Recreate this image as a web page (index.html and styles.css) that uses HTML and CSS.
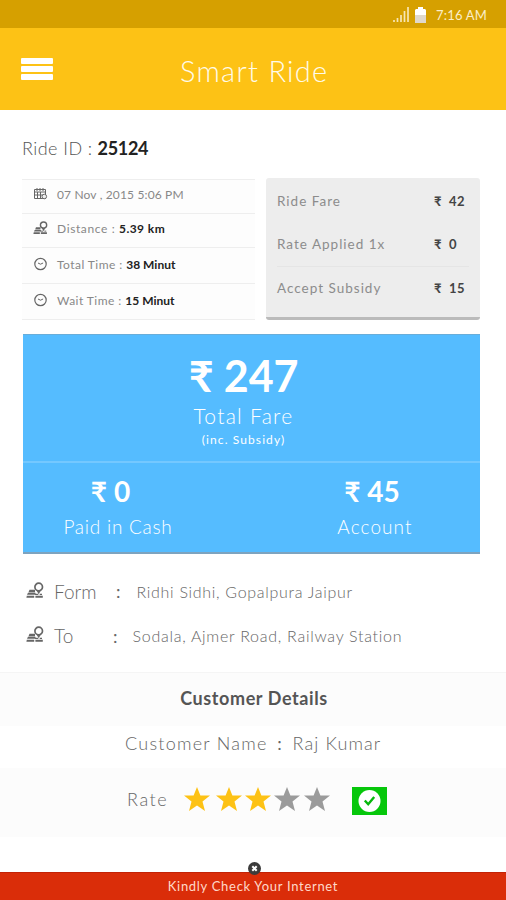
FILE: index.html
```html
<!DOCTYPE html>
<html lang="en">
<head>
<meta charset="utf-8">
<title>Smart Ride</title>
<link rel="stylesheet" href="styles.css">
</head>
<body>
<svg class="defs" width="0" height="0" aria-hidden="true">
  <symbol id="route" viewBox="0 0 18 17">
    <circle cx="12.700" cy="5" r="3.800" fill="none" stroke="currentColor" stroke-width="1.700"/>
    <path d="M10.400 8.300l2.300 4 2.300-4z" fill="currentColor"/>
    <path d="M3.500 7.700h5.500v2.500H2.500zM2 10.800h7.500v2H1zM.8 13.700h7.400v2H.4zM9.400 13.700h7.400v2H9.400z" fill="currentColor"/>
    <path d="M9 12.300h3.300M13.700 12.300h2.300" stroke="currentColor" stroke-width="1.200"/>
  </symbol>
  <symbol id="clock" viewBox="0 0 14 14">
    <circle cx="7" cy="7" r="5.700" fill="none" stroke="currentColor" stroke-width="1.200"/>
    <path d="M4.500 6l2.500 1.200L9.600 6" fill="none" stroke="currentColor"/>
  </symbol>
  <symbol id="star" viewBox="0 0 26 24">
    <path d="M13 0l3.400 8.500H26l-7.500 6L21 24l-8-5.500L5 24l2.500-9.500L0 8.500h9.600z" fill="currentColor"/>
  </symbol>
</svg>

<div class="status">
  <svg width="16" height="16" viewBox="0 0 16 16"><path d="M1 15v-2M4.500 15v-4M8 15V8M11.500 15V4M15 15V0" stroke="#f7e6b4" stroke-width="1.700"/></svg>
  <svg class="battery" width="11" height="16" viewBox="0 0 11 16"><path d="M3 0h5v2h2l1 1v5H0V3l1-1h2z" fill="#fff"/><path d="M0 8h11v8H0z" fill="#e0d8cc"/></svg>
  <span class="time">7:16 AM</span>
</div>
<header class="bar">
  <div class="menu"><i></i><i></i><i></i></div>
  <h1>Smart Ride</h1>
</header>

<p class="ride-id"><span>Ride ID :</span> <b>25124</b></p>

<div class="cards">
  <ul class="trip">
    <li><svg width="14" height="12" viewBox="0 0 14 12"><path d="M1 1.500h11v9H1zM3.500 0v3M6.500 0v3M9.500 0v3M1 4h11M1 7h9M4 4v6M7 4v6" fill="none" stroke="currentColor"/><circle cx="10.800" cy="8.500" r="2.300" fill="#eee" stroke="currentColor"/></svg><span class="t-date">07 Nov , 2015 5:06 PM</span></li>
    <li><svg width="15" height="14"><use href="#route"/></svg><span class="t-dist">Distance : <b>5.39 km</b></span></li>
    <li><svg width="14" height="14"><use href="#clock"/></svg><span class="t-time">Total Time : <b>38 Minut</b></span></li>
    <li><svg width="14" height="14"><use href="#clock"/></svg><span class="t-time">Wait Time : <b>15 Minut</b></span></li>
  </ul>
  <div class="fares">
    <div><span>Ride Fare</span><b><i>₹</i>42</b></div>
    <div><span>Rate Applied 1x</span><b><i>₹</i>0</b></div>
    <div><span>Accept Subsidy</span><b><i>₹</i>15</b></div>
  </div>
</div>

<section class="total">
  <div class="sum">
    <strong>₹ 247</strong>
    <span class="label">Total Fare</span>
    <small>(inc. Subsidy)</small>
  </div>
  <div class="split">
    <div class="cash"><strong>₹ 0</strong><span>Paid in Cash</span></div>
    <div class="account"><strong>₹ 45</strong><span>Account</span></div>
  </div>
</section>

<div class="places">
  <div class="from"><svg width="18" height="17"><use href="#route"/></svg><span class="key">Form</span><span class="colon">:</span><span class="value">Ridhi Sidhi, Gopalpura Jaipur</span></div>
  <div class="to"><svg width="18" height="17"><use href="#route"/></svg><span class="key">To</span><span class="colon">:</span><span class="value">Sodala, Ajmer Road, Railway Station</span></div>
</div>

<section class="customer">
  <h2>Customer Details</h2>
  <p><span>Customer Name</span><em>:</em><span class="name">Raj Kumar</span></p>
  <div class="rate">
    <span>Rate</span>
    <div class="stars">
      <svg width="26" height="24"><use href="#star"/></svg>
      <svg class="second" width="26" height="24"><use href="#star"/></svg>
      <svg width="26" height="24"><use href="#star"/></svg>
      <svg class="off" width="26" height="24"><use href="#star"/></svg>
      <svg class="off" width="26" height="24"><use href="#star"/></svg>
    </div>
    <svg class="check" width="35" height="28" viewBox="0 0 35 28"><path d="M0 0h35v28H0z" fill="#06c70b"/><circle cx="17.500" cy="14" r="11" fill="#fff"/><path d="M12.800 13.500l3.400 3.700 6-7.200" fill="none" stroke="#06b80b" stroke-width="2.400"/></svg>
  </div>
</section>

<footer>
  <svg class="close" width="13" height="13" viewBox="0 0 13 13"><circle cx="6.500" cy="6.500" r="6.500" fill="#3b3b3b"/><path d="M4.300 4.300l4.400 4.400M8.700 4.300L4.300 8.700" stroke="#fff" stroke-width="2"/></svg>
  <span>Kindly Check Your Internet</span>
</footer>
</body>
</html>
```

FILE: styles.css
```css
* { box-sizing: border-box; margin: 0; padding: 0; }
body {
  width: 506px; height: 900px; overflow: hidden;
  display: flex; flex-direction: column;
  background: #fff; color: #666;
  font-family: Lato, "Noto Sans", sans-serif; font-weight: 300;
  white-space: nowrap;
}
.defs { position: absolute; }
i, em { font-style: normal; }
svg { flex: none; display: block; }

.status { height: 28px; background: #d6a000; display: flex; align-items: center; padding: 1px 0 0 393px; }
.battery { margin-left: 6px; }
.time { margin-left: 10px; color: #fbeec8; font-size: 13px; font-weight: 400; letter-spacing: .2px; }
.bar { height: 82px; background: #fdc215; display: flex; align-items: center; padding-left: 21px; }
.menu { display: flex; flex-direction: column; gap: 2px; width: 32px; margin-top: -1px; }
.menu i { height: 6px; background: #fff; border-radius: 1px; }
h1 { margin: 2px 0 0 127px; color: #fffbea; font-size: 29px; font-weight: 300; letter-spacing: 1.3px; }

.ride-id { height: 68px; padding: 26px 0 0 22px; font-size: 18px; line-height: 24px; color: #555; }
.ride-id span { letter-spacing: .45px; }
.ride-id b { color: #222; font-weight: 700; letter-spacing: -.3px; }

.cards { display: flex; gap: 11px; padding-left: 22px; height: 156px; }
.trip { width: 233px; list-style: none; padding-top: 1px; }
.trip li { height: 34px; display: flex; align-items: center; background: #fdfdfd; border-top: 1px solid #eee; font-size: 12px; font-weight: 400; padding: 0 0 5px 11px; color: #888; }
.trip li:nth-child(3) { height: 36px; padding-bottom: 3px; }
.trip li:last-child { border-bottom: 1px solid #eee; height: 37px; padding-bottom: 3px; }
.trip svg { width: 15px; margin-right: 9px; color: #666; }
.trip b { color: #222; font-weight: 700; }
.t-date { letter-spacing: .15px; }
.t-dist { letter-spacing: .62px; }
.t-dist b { letter-spacing: .45px; }
.t-time { letter-spacing: .45px; }
.t-time b { letter-spacing: 0; }
.fares { width: 214px; height: 142px; background: #ededed; border-radius: 3px; border-bottom: 3px solid #bbb; padding: 1px 11px 8px; }
.fares div { height: 43.500px; display: flex; align-items: center; font-size: 13.500px; font-weight: 400; color: #8c8c8c; letter-spacing: 1px; }
.fares div + div + div { border-top: 1px solid #e5e5e5; }
.fares b { margin-left: auto; width: 35px; display: flex; font-size: 13px; color: #444; font-weight: 700; letter-spacing: .5px; }
.fares b i { width: 15px; font-size: 13px; }

.total { margin-left: 23px; width: 457px; height: 220px; background: #55bcff; color: #fff; border-bottom: 2px solid #7da3bf; border-top: 1px solid #69add9; }
.sum { height: 128px; display: flex; flex-direction: column; align-items: center; border-bottom: 2px solid #74c8ff; padding: 16px 16px 0 0; }
.sum strong { font-size: 43px; line-height: 50px; font-weight: 700; letter-spacing: -.1px; }
.sum .label { font-size: 21px; line-height: 30px; letter-spacing: 1.3px; }
.sum small { font-size: 12px; line-height: 17px; font-weight: 400; letter-spacing: 1.1px; }
.split { display: flex; padding-top: 11px; }
.split div { display: flex; flex-direction: column; align-items: center; }
.split strong { font-size: 28px; line-height: 34px; font-weight: 700; padding-right: 6px; }
.split span { font-size: 19px; line-height: 38px; letter-spacing: .75px; }
.split .cash strong { padding-right: 15px; }
.account span { letter-spacing: 1.1px; }
.cash { width: 190px; }
.account { margin-left: 67px; width: 190px; }

.places { height: 118px; padding: 15px 0 0 26px; }
.places div { height: 44.500px; display: flex; align-items: center; }
.places svg { margin-right: 10px; color: #666; margin-top: -2px; }
.key { font-size: 19px; width: 62px; }
.colon { font-size: 18px; font-weight: 400; }
.value { font-size: 16px; margin-left: 16px; }
.from .value { letter-spacing: .7px; }
.to .key { width: 59px; }
.to .value { letter-spacing: .73px; margin-left: 15px; }

.customer { height: 165px; }
.customer h2 { height: 54px; border-top: 1px solid #f5f5f5; background: #fcfcfc; text-align: center; font-size: 18px; line-height: 51px; font-weight: 700; color: #555; letter-spacing: .6px; padding-left: 2px; }
.customer p { height: 42px; display: flex; align-items: center; padding: 0 0 9px 125px; font-size: 18px; letter-spacing: 1.25px; }
.customer em { width: 25px; text-align: center; font-weight: 400; }
.name { letter-spacing: 1.1px; }
.rate { height: 69px; background: #fcfcfc; display: flex; align-items: center; padding: 0 0 8px 127px; font-size: 18px; }
.rate > span { width: 41px; letter-spacing: 1.6px; }
.stars { width: 146px; display: flex; justify-content: space-between; margin-left: 16px; color: #fdc215; }
.stars .second { margin: 0 -1px 0 2px; }
.stars .off { color: #9b9b9b; }
.check { margin-left: 22px; margin-top: 4px; }

footer { margin-top: auto; height: 28px; background: #da2d09; border-top: 1px solid #c32206; position: relative; text-align: center; color: #ffd8c8; font-size: 13px; line-height: 27px; font-weight: 400; letter-spacing: .7px; }
.close { position: absolute; left: 248px; top: -11px; }
```
